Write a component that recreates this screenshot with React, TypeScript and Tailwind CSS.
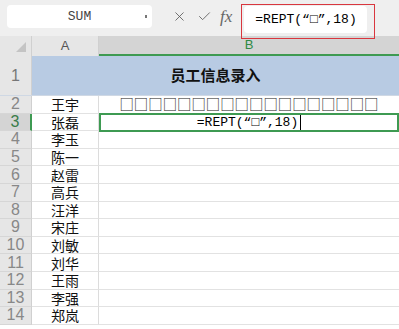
import { X, Check } from "lucide-react";

const names = ["王宇", "张磊", "李玉", "陈一", "赵雷", "高兵", "汪洋", "宋庄", "刘敏", "刘华", "王雨", "李强", "郑岚"];

const cjk = { fontFamily: '"Noto Sans CJK SC", sans-serif' };
const mono = { fontFamily: '"Liberation Mono", "Noto Sans CJK SC", monospace' };
const sans = { fontFamily: '"Liberation Sans", sans-serif' };

export default function App() {
  return (
    <div className="relative w-[399px] h-[329px] overflow-hidden bg-white" style={cjk}>
      {/* formula toolbar */}
      <div className="h-[36px] bg-[#efefef] flex items-start">
        <div className="ml-[7px] mt-[5px] w-[145px] h-[23px] bg-white rounded-[4px] flex items-center relative">
          <span className="flex-1 text-center text-[13px] text-[#444]" style={mono}>SUM</span>
          <span className="absolute right-[5px] top-[10px] w-[2px] h-[3px] bg-[#777]" />
        </div>
        <div className="ml-[20px] mt-[9px] text-[#555]">
          <X size={15} strokeWidth={1.3} />
        </div>
        <div className="ml-[10px] mt-[9px] text-[#555]">
          <Check size={15} strokeWidth={1.3} />
        </div>
        <div className="ml-[8px] mt-[6px] text-[17px] italic text-[#666] leading-none pt-[2px]" style={{ fontFamily: '"Liberation Serif", serif' }}>
          fx
        </div>
        <div className="ml-[12px] mt-[6px] w-[123px] h-[27px] bg-white rounded-[4px] flex items-center pl-[11px]">
          <span className="text-[13px] text-black" style={mono}>=REPT(“□”,18)</span>
        </div>
      </div>

      {/* red annotation box */}
      <div className="absolute left-[241px] top-[4px] w-[134px] h-[35px] border-[1.5px] border-[#d9363e]" />

      {/* column headers */}
      <div className="flex h-[20px] bg-[#e6e6e6]">
        <div className="w-[32px] relative border-r border-[#d0d0d0]">
          <div className="absolute right-[5px] bottom-[4px] w-0 h-0 border-l-[10px] border-l-transparent border-b-[10px] border-b-[#c4c4c4]" />
        </div>
        <div className="w-[67px] flex items-center justify-center text-[13px] text-[#555] border-r border-[#d0d0d0]" style={sans}>
          A
        </div>
        <div className="flex-1 flex items-center justify-center text-[13px] text-[#2f8a45] bg-[#d4d4d4] border-b-2 border-[#3e9a52]" style={sans}>
          B
        </div>
      </div>

      {/* row 1 */}
      <div className="flex h-[40px] border-b border-[#cfd8e4]">
        <div className="w-[32px] bg-[#e6e6e6] border-r border-[#d0d0d0] flex items-center justify-center text-[16px] text-[#777]" style={sans}>
          1
        </div>
        <div className="flex-1 bg-[#b8cbe3] flex items-center justify-center text-[15px] font-bold text-[#111]">
          员工信息录入
        </div>
      </div>

      {/* data rows */}
      {names.map((name, i) => {
        const row = i + 2;
        const selected = row === 3;
        return (
          <div key={row} className="flex h-[17.6px]">
            <div
              className={
                "w-[32px] flex items-center justify-center text-[16px] leading-none border-b border-[#d6d6d6] " +
                (selected ? "bg-[#d4d4d4] text-[#3a7d4a] border-r-2 border-r-[#3e9a52]" : "bg-[#e6e6e6] text-[#888] border-r border-r-[#d0d0d0]")
              }
              style={sans}
            >
              {row}
            </div>
            <div className="w-[67px] flex items-center justify-center text-[14px] text-[#111] border-r border-[#dcdcdc] border-b border-b-[#e2e2e2] leading-none">
              {name}
            </div>
            {row === 2 ? (
              <div className="flex-1 flex items-center justify-center text-[14.4px] text-[#222] border-b border-[#3e9a52] leading-none">
                {"□".repeat(18)}
              </div>
            ) : selected ? (
              <div className="flex-1 border-2 border-[#3e9a52] -mt-px h-[19px] flex items-center justify-center">
                <span className="text-[13px] text-black leading-none" style={mono}>=REPT(“□”,18)</span>
                <span className="w-px h-[15px] bg-black ml-[2px]" />
              </div>
            ) : (
              <div className="flex-1 border-b border-[#e2e2e2]" />
            )}
          </div>
        );
      })}
    </div>
  );
}
